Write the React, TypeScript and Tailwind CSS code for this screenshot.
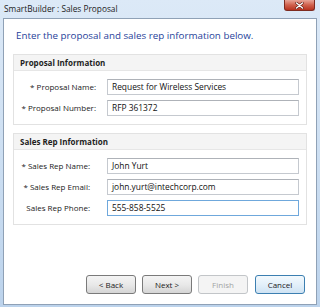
import type { ReactNode } from 'react';

const FONT = { fontFamily: '"Open Sans", "Noto Sans", sans-serif' };

type Field = { label: string; value: string; focused?: boolean };

const proposalFields: Field[] = [
  { label: '* Proposal Name:', value: 'Request for Wireless Services' },
  { label: '* Proposal Number:', value: 'RFP 361372' },
];

const repFields: Field[] = [
  { label: '* Sales Rep Name:', value: 'John Yurt' },
  { label: '* Sales Rep Email:', value: 'john.yurt@intechcorp.com' },
  { label: 'Sales Rep Phone:', value: '555-858-5525', focused: true },
];

function GroupBox({ title, children }: { title: string; children: ReactNode }) {
  return (
    <div className="border border-[#e2e2e2] bg-white">
      <div className="h-[16px] border-b border-[#e6e6e6] bg-[#f4f4f4] pl-[6px] text-[8px] font-bold leading-[16px] text-[#1e1e1e]">
        {title}
      </div>
      {children}
    </div>
  );
}

function FieldRows({ fields, labelWidth }: { fields: Field[]; labelWidth: string }) {
  return (
    <div className="flex flex-col gap-[5px] pt-[8px] pr-[7px] pb-[8px]">
      {fields.map((f) => (
        <div key={f.label} className="flex items-center">
          <span className={`${labelWidth} shrink-0 text-right text-[8px] text-[#1a1a1a]`}>{f.label}</span>
          <div
            className={`ml-auto h-[16px] w-[192px] border bg-white pl-[4px] text-[8.4px] leading-[14px] text-[#111] ${
              f.focused ? 'border-[#6fa8dc]' : 'border-[#c5c9cf] border-t-[#aeb2b8]'
            }`}
          >
            {f.value}
          </div>
        </div>
      ))}
    </div>
  );
}

function WinButton({ children, kind = 'normal' }: { children: ReactNode; kind?: 'normal' | 'disabled' | 'default' }) {
  const look =
    kind === 'disabled'
      ? 'border-[#c2c5c8] bg-[#f4f4f4] text-[#a3a3a3]'
      : kind === 'default'
        ? 'border-[#3c7fb1] bg-gradient-to-b from-[#f3f9fd] via-[#e3f0fa] to-[#cfe3f3] text-[#1a1a1a]'
        : 'border-[#7a7a7a] bg-gradient-to-b from-[#f4f4f4] via-[#e9e9e9] to-[#d5d5d5] text-[#1a1a1a]';
  return (
    <div className={`flex h-[19px] w-[50px] items-center justify-center rounded-[3px] border text-[8px] ${look}`}>
      {children}
    </div>
  );
}

export default function App() {
  return (
    <div
      className="flex h-[307px] w-[320px] flex-col overflow-hidden bg-gradient-to-b from-[#dce9f7] via-[#cddff2] to-[#bcd3ec]"
      style={FONT}
    >
      <div className="flex h-[18px] shrink-0 items-start pl-[4px] pr-[5px]">
        <span className="text-[8.3px] leading-[17px] text-[#1b1b1b]">SmartBuilder : Sales Proposal</span>
        <div className="ml-auto flex h-[11px] w-[31px] items-center justify-center rounded-b-[3px] border border-t-0 border-[#7d2b20] bg-gradient-to-b from-[#e7a497] via-[#d0604c] to-[#b8321e]">
          <svg width="9" height="7" viewBox="0 0 9 7">
            <path d="M1.5 1 L7.5 6 M7.5 1 L1.5 6" stroke="#5a1a12" strokeWidth="2.6" strokeLinecap="round" />
            <path d="M1.5 1 L7.5 6 M7.5 1 L1.5 6" stroke="#ffffff" strokeWidth="1.5" strokeLinecap="round" />
          </svg>
        </div>
      </div>

      <div className="mx-[3px] mb-[2px] flex flex-1 flex-col border border-[#8fa1b6] bg-white px-[9px] pb-[10px]">
        <div className="mt-[9px] pl-[3px] text-[9.8px] leading-[16px] text-[#1f3f9a]">
          Enter the proposal and sales rep information below.
        </div>

        <div className="mt-[10px] flex flex-col gap-[8px]">
          <GroupBox title="Proposal Information">
            <FieldRows fields={proposalFields} labelWidth="w-[82px]" />
          </GroupBox>
          <GroupBox title="Sales Rep Information">
            <FieldRows fields={repFields} labelWidth="w-[76px]" />
          </GroupBox>
        </div>

        <div className="flex-1" />

        <div className="flex justify-end gap-[6px] pr-[2px]">
          <WinButton>&lt; Back</WinButton>
          <WinButton>Next &gt;</WinButton>
          <WinButton kind="disabled">Finish</WinButton>
          <div className="ml-[1px]">
            <WinButton kind="default">Cancel</WinButton>
          </div>
        </div>
      </div>
    </div>
  );
}
